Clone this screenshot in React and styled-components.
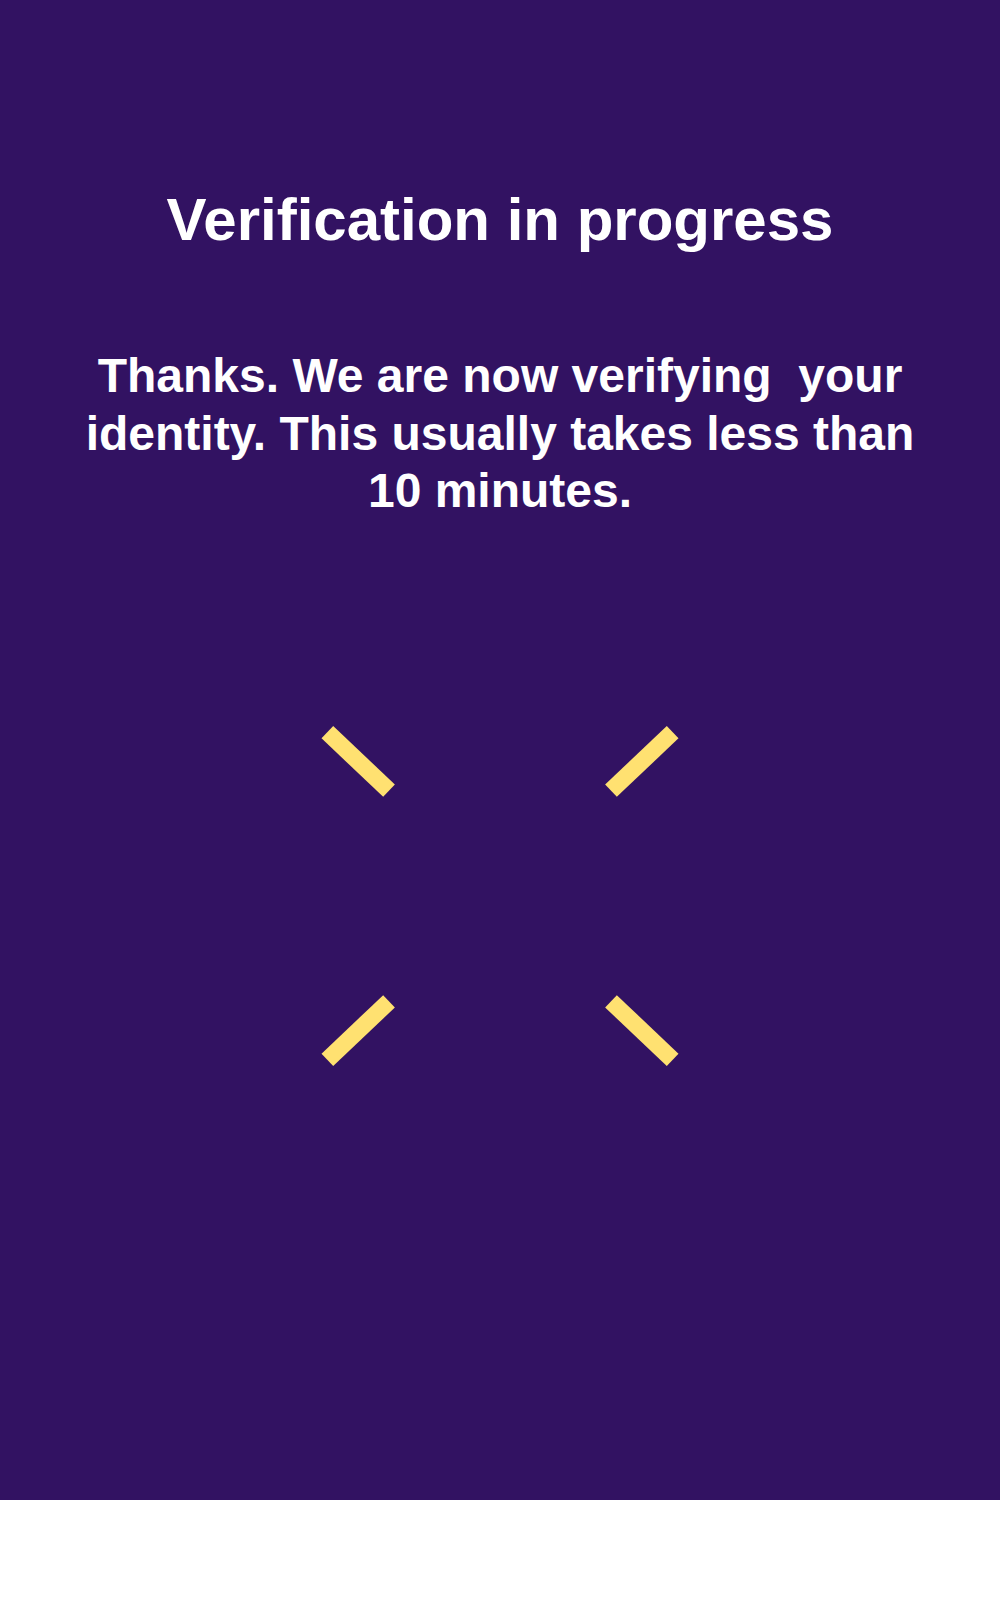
import React from 'react';
import styled, { createGlobalStyle } from 'styled-components';

const GlobalStyle = createGlobalStyle`
  html, body {
    margin: 0;
    padding: 0;
    background: #ffffff;
  }
  body {
    font-family: "Liberation Sans", Arial, Helvetica, sans-serif;
  }
`;

const Screen = styled.main`
  box-sizing: border-box;
  height: 1500px;
  background: #321262;
  color: #ffffff;
  padding: 184px 80px 0;
  display: flex;
  flex-direction: column;
  align-items: center;
  text-align: center;
`;

const Title = styled.h1`
  margin: 0;
  font-size: 60px;
  line-height: 72px;
  font-weight: 700;
`;

const Message = styled.p`
  margin: 91px 0 0;
  font-size: 48px;
  line-height: 57.6px;
  font-weight: 700;
`;

const Loader = styled.svg`
  display: block;
  margin-top: 176px;
  width: 400px;
  height: 400px;
`;

// four rays pointing at the centre, angle measured from the x axis
const RAYS = [43.5, 136.5, 223.5, 316.5];
const INNER = 153;
const OUTER = 238;

function Spinner() {
  return (
    <Loader viewBox="-200 -200 400 400" aria-hidden="true">
      {RAYS.map((deg) => {
        const r = (deg * Math.PI) / 180;
        return (
          <line
            key={deg}
            x1={Math.cos(r) * INNER}
            y1={Math.sin(r) * INNER}
            x2={Math.cos(r) * OUTER}
            y2={Math.sin(r) * OUTER}
            stroke="#FFE171"
            strokeWidth="17"
            strokeLinecap="butt"
          />
        );
      })}
    </Loader>
  );
}

export default function App() {
  return (
    <>
      <GlobalStyle />
      <Screen>
        <Title>Verification in progress</Title>
        <Message>
          Thanks. We are now verifying{'\u00a0'} your identity. This usually takes less than 10 minutes.
        </Message>
        <Spinner />
      </Screen>
    </>
  );
}
